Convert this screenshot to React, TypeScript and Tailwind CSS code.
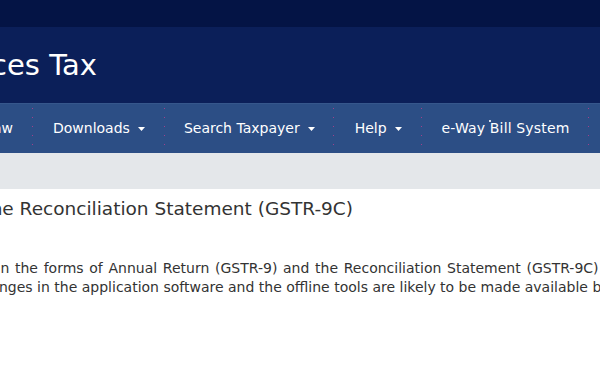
const font = { fontFamily: '"DejaVu Sans", Verdana, sans-serif' };

function Caret() {
  return (
    <svg width="7" height="4" viewBox="0 0 7 4" className="ml-[8px] shrink-0">
      <path d="M0 0h7L3.5 4z" fill="#ffffff" />
    </svg>
  );
}

function Sep() {
  return (
    <div className="w-px self-stretch shrink-0 bg-[linear-gradient(to_bottom,#a0408c_1px,transparent_1px)] bg-[length:1px_9px] bg-[position:0_4px]"></div>
  );
}

export default function App() {
  return (
    <div className="w-[600px] h-[371px] overflow-hidden bg-white" style={font}>
      {/* top strip */}
      <div className="h-[27px] bg-[#041445]"></div>

      {/* title band */}
      <div className="h-[76px] bg-[#0b1f59] pt-6">
        <div className="flex justify-end w-[97px]">
          <span className="whitespace-nowrap text-white text-[29px] leading-none">Goods and Services Tax</span>
        </div>
      </div>

      {/* menu */}
      <div className="h-[50px] bg-[#2c4e85] border-t border-[#36578c] flex items-stretch text-white text-[14px]">
        <div className="w-[32px] shrink-0 flex justify-end items-center pr-[19px]">
          <span className="whitespace-nowrap">GST Law</span>
        </div>
        <Sep />
        <div className="flex items-center pl-5 pr-[19px] shrink-0">
          <span className="whitespace-nowrap">Downloads</span>
          <Caret />
        </div>
        <Sep />
        <div className="flex items-center pl-[19px] pr-[18px] shrink-0">
          <span className="whitespace-nowrap">Search Taxpayer</span>
          <Caret />
        </div>
        <Sep />
        <div className="flex items-center pl-[21px] pr-[19px] shrink-0">
          <span className="whitespace-nowrap">Help</span>
          <Caret />
        </div>
        <Sep />
        <div className="flex items-center pl-5 pr-[19px] shrink-0">
          <span className="whitespace-nowrap relative tracking-[0.15px]">
            e-Way Bill System
            <span className="absolute left-[47px] top-[2px] w-[2px] h-[2px] bg-white/80"></span>
          </span>
        </div>
        <Sep />
      </div>

      {/* breadcrumb strip */}
      <div className="h-[36px] bg-[#e4e7ea]"></div>

      {/* content */}
      <div className="text-[#333333]">
        <div className="mt-[11px] flex justify-end w-[353px]">
          <h1 className="whitespace-nowrap text-[18.5px] leading-none">
            Annual Return (GSTR-9) and the Reconciliation Statement (GSTR-9C)
          </h1>
        </div>
        <div className="mt-[40px] text-[14px] leading-[19px]">
          <p className="whitespace-nowrap -ml-[68px] [word-spacing:1.25px]">
            changes in the forms of Annual Return (GSTR-9) and the Reconciliation Statement (GSTR-9C)
          </p>
          <p className="whitespace-nowrap -ml-px">
            nges in the application software and the offline tools are likely to be made available by
          </p>
        </div>
      </div>
    </div>
  );
}
